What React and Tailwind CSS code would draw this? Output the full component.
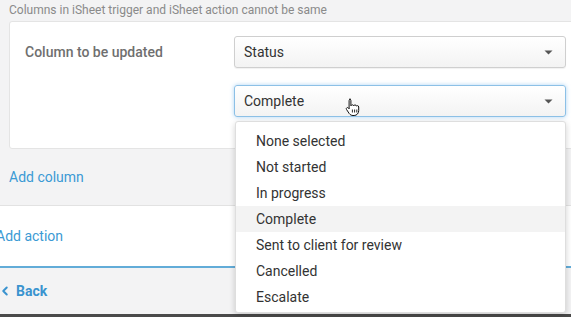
import { ChevronLeft } from 'lucide-react';

const options = [
  'None selected',
  'Not started',
  'In progress',
  'Complete',
  'Sent to client for review',
  'Cancelled',
  'Escalate',
];

function Caret() {
  return (
    <svg width="9" height="5" viewBox="0 0 9 5" className="shrink-0">
      <path d="M0.5 0.5 L8.5 0.5 L4.5 4.5 Z" fill="#555" />
    </svg>
  );
}

function Select({ value, focused }) {
  return (
    <div
      className={`flex items-center justify-between w-[332px] h-[32px] pl-[9px] pr-[12px] rounded-[3px] border bg-gradient-to-b from-white to-[#f3f3f3] text-[14px] text-[#333] ${
        focused
          ? 'border-[#8cc0e6] shadow-[0_0_4px_rgba(102,175,233,0.55)]'
          : 'border-[#cfcfcf] shadow-[0_1px_1px_rgba(0,0,0,0.06)]'
      }`}
    >
      <span>{value}</span>
      <Caret />
    </div>
  );
}

function HandCursor() {
  return (
    <svg width="15" height="18" viewBox="0 0 15 18" className="absolute left-[345px] top-[98px]">
      <path
        d="M4.5 1.2c.8 0 1.4.6 1.4 1.4v5.2c.2-.6.8-1 1.4-1 .7 0 1.2.4 1.4 1 .2-.5.7-.9 1.300-.9.7 0 1.3.5 1.4 1.2.2-.3.6-.5 1-.5.8 0 1.3.6 1.3 1.4v3.6c0 2.6-1.8 4.9-4.6 4.9H8c-1.6 0-2.8-.7-3.8-2L1.6 11.6c-.5-.6-.4-1.4.2-1.8.6-.4 1.3-.3 1.7.3l.6.8V2.6c0-.8.6-1.4 1.4-1.4z"
        fill="#fff"
        stroke="#111"
        strokeWidth="1"
      />
      <path d="M7.4 11.5v3M9.6 11.5v3M11.8 11.5v3" stroke="#111" strokeWidth="0.9" />
    </svg>
  );
}

export default function App() {
  return (
    <div className="relative w-[571px] h-[317px] overflow-hidden bg-[#f3f3f4] font-['Roboto',sans-serif] flex flex-col">
      <p className="pt-[3px] pl-[9px] text-[12px] leading-[14px] text-[#8a8a8a]">
        Columns in iSheet trigger and iSheet action cannot be same
      </p>

      <div className="mt-[4px] ml-[9px] w-[580px] h-[128px] shrink-0 bg-white border border-[#e4e4e4] rounded-[3px] flex pt-[14px]">
        <div className="w-[224px] pl-[15px] h-[32px] flex items-center text-[14px] font-medium text-[#6f6f6f]">
          Column to be updated
        </div>
        <div className="flex flex-col gap-[17px]">
          <Select value="Status" />
          <Select value="Complete" focused />
        </div>
      </div>

      <div className="h-[56px] shrink-0 flex items-center pl-[9px] text-[14px] text-[#3b9ad4]">
        Add column
      </div>

      <div className="h-[61px] shrink-0 bg-white border-t border-[#e2e2e2] flex items-center -ml-[4px] text-[14px] text-[#3b9ad4]">
        Add action
      </div>

      <div className="h-[2px] shrink-0 bg-[#62acd8]" />

      <div className="flex-1 flex items-center gap-[4px] -ml-[2px] text-[14px] font-bold text-[#3a93cf]">
        <ChevronLeft size={14} strokeWidth={3.4} />
        <span>Back</span>
      </div>

      <div className="h-[3px] shrink-0 bg-[#4a4a4a]" />

      <div className="absolute left-[235px] top-[121px] w-[331px] h-[192px] bg-white rounded-[3px] border border-[#dedede] shadow-[0_2px_6px_rgba(0,0,0,0.18)] pt-[6px]">
        {options.map((o) => (
          <div
            key={o}
            className={`h-[26px] flex items-center pl-[20px] text-[14px] text-[#333] ${
              o === 'Complete' ? 'bg-[#f3f3f3]' : ''
            }`}
          >
            {o}
          </div>
        ))}
      </div>

      <HandCursor />
    </div>
  );
}
